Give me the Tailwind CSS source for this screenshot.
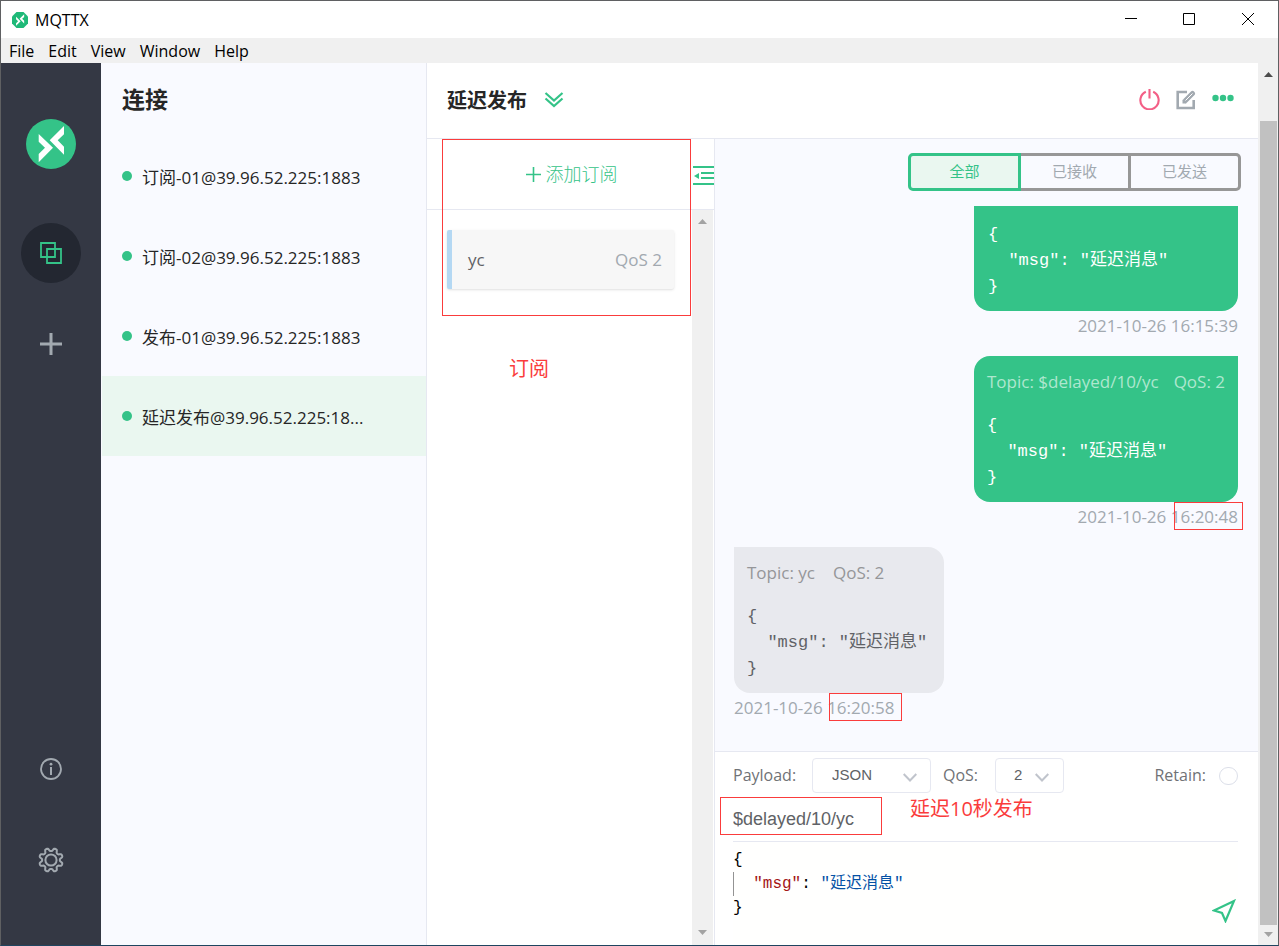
<!DOCTYPE html>
<html lang="zh-CN">
<head>
<meta charset="utf-8">
<meta name="viewport" content="width=device-width, initial-scale=1">
<title>MQTTX</title>
<script src="https://cdn.jsdelivr.net/npm/@tailwindcss/browser@4"></script>
</head>
<body class="font-['Open_Sans','Noto_Sans_CJK_SC',sans-serif] text-[#262626]">
<div class="flex h-screen flex-col overflow-hidden border border-[#5f6062] border-b-[#1f4560] bg-white">

  <!-- Title bar -->
  <header class="flex h-[37px] shrink-0 items-center pl-[11px] text-base text-black">
    <svg class="size-4" viewBox="0 0 50 50" aria-hidden="true"><path fill="#1fb978" d="M14 0h22l14 14v22L36 50H14L0 36V14z"/><path fill="#fff" d="M12.7 15 27 28.7 12.7 43.3V35l6.300-6.300-6.300-6zM38 7v8.300l-6.300 6 6.300 6.400v8L23.700 21.300z"/></svg>
    <span class="ml-[7px]">MQTTX</span>
    <div class="ml-auto flex h-full pb-px">
      <button aria-label="Minimize" class="flex w-[58px] items-center justify-center"><svg class="size-3" viewBox="0 0 12 12"><path d="M0 5.500h12" stroke="#000"/></svg></button>
      <button aria-label="Maximize" class="flex w-[58px] items-center justify-center"><svg class="size-3" viewBox="0 0 12 12"><path d="M.5.5h11v11H.5z" fill="none" stroke="#000"/></svg></button>
      <button aria-label="Close" class="flex w-[60px] items-center justify-center"><svg class="size-3" viewBox="0 0 12 12"><path d="m0 0 12 12M12 0 0 12" stroke="#000"/></svg></button>
    </div>
  </header>

  <nav class="flex h-[25px] shrink-0 items-center gap-[14px] bg-[#f0f0f0] pl-2 text-base text-black">
    <button>File</button><button>Edit</button><button>View</button><button>Window</button><button>Help</button>
  </nav>

  <div class="flex min-h-0 flex-1">
    <!-- Icon rail -->
    <aside class="flex w-[100px] shrink-0 flex-col items-center bg-[#343844] pt-14 pb-[55px] text-[#a2a9b0]">
      <svg class="size-[50px]" viewBox="0 0 50 50" role="img" aria-label="MQTTX"><circle cx="25" cy="25" r="25" fill="#34c388"/><path fill="#fff" d="M12.7 15 27 28.700 12.700 43.300V35l6.300-6.300-6.300-6zM38 7v8.300l-6.300 6 6.300 6.400v8L23.700 21.300z"/></svg>
      <button aria-label="连接" class="mt-[54px] flex size-[60px] items-center justify-center rounded-full bg-[#232731] text-[#34c388]">
        <svg class="size-[22px]" viewBox="0 0 22 22" fill="none" stroke="currentColor" stroke-width="1.800"><path d="M1 1h14v14H1zM7 7h14v14H7z"/></svg>
      </button>
      <button aria-label="新建" class="mt-[31px] flex size-[60px] items-center justify-center">
        <svg class="size-[22px]" viewBox="0 0 22 22" stroke="currentColor" stroke-width="3"><path d="M11 0v22M0 11h22"/></svg>
      </button>
      <button aria-label="关于" class="mt-auto flex size-[60px] items-center justify-center">
        <svg class="size-[22px]" viewBox="0 0 22 22" fill="none" stroke="currentColor" stroke-width="1.800"><circle cx="11" cy="11" r="10"/><path d="M11 9v8" stroke-width="2"/><circle cx="11" cy="6.200" r="1.400" fill="currentColor" stroke="none"/></svg>
      </button>
      <button aria-label="设置" class="mt-[31px] flex size-[60px] items-center justify-center">
        <svg class="size-[26px]" viewBox="0 0 26 26" fill="none" stroke="currentColor" stroke-width="2" stroke-linejoin="round"><circle cx="13" cy="13" r="5.600"/><path id="gear" d=""/></svg>
      </button>
    </aside>

    <!-- Connections -->
    <section class="flex w-[326px] shrink-0 flex-col border-r border-[#e6e8f1] bg-[#f9faff]">
      <h1 class="flex h-[73px] items-center pl-[21px] text-[23px] font-bold">连接</h1>
      <ul class="text-[17px] font-medium">
        <li class="flex h-20 items-center gap-[10px] pl-[21px]"><span class="size-[10px] rounded-full bg-[#34c388]"></span><a href="#" class="pt-1"><span class="font-normal">订阅</span>-01@39.96.52.225:1883</a></li>
        <li class="flex h-20 items-center gap-[10px] pl-[21px]"><span class="size-[10px] rounded-full bg-[#34c388]"></span><a href="#" class="pt-1"><span class="font-normal">订阅</span>-02@39.96.52.225:1883</a></li>
        <li class="flex h-20 items-center gap-[10px] pl-[21px]"><span class="size-[10px] rounded-full bg-[#34c388]"></span><a href="#" class="pt-1"><span class="font-normal">发布</span>-01@39.96.52.225:1883</a></li>
        <li class="ml-px flex h-20 items-center gap-[10px] bg-[#eaf7f0] pl-5"><span class="size-[10px] rounded-full bg-[#34c388]"></span><a href="#" class="pt-1"><span class="font-normal">延迟发布</span>@39.96.52.225:18...</a></li>
      </ul>
    </section>

    <!-- Active connection -->
    <main class="flex min-w-0 flex-1 flex-col">
      <div class="flex h-[76px] shrink-0 items-center border-b border-[#e6e8f1] pr-6 pb-[2px] pl-5">
        <h2 class="pt-[2px] text-xl font-bold">延迟发布</h2>
        <button aria-label="展开" class="ml-[17px] text-[#34c388]"><svg class="h-4 w-5" viewBox="0 0 20 16" fill="none" stroke="currentColor" stroke-width="2.200"><path d="m1.500 1 8.500 7.500L18.500 1M1.500 6.500 10 14l8.500-7.500"/></svg></button>
        <div class="ml-auto flex items-center gap-4">
          <button aria-label="断开连接" class="text-[#f35f86]"><svg class="size-[21px]" viewBox="0 0 20 20" fill="none" stroke="currentColor" stroke-width="2"><path d="M6.500 2.700a8.700 8.700 0 1 0 7 0M10 0v9"/></svg></button>
          <button aria-label="编辑" class="text-[#a2a9b0]"><svg class="size-5" viewBox="0 0 20 20" fill="none" stroke="currentColor"><path d="M11 2H1.700v16h16v-8" stroke-width="2.600"/><path d="m9.500 10.500 7-7" stroke-width="5" stroke-linecap="round"/><path d="M6.500 13.500V9.500l4 4z" fill="currentColor" stroke="none"/><path d="m9.500 10.500 7-7" stroke="#fff" stroke-width="1"/></svg></button>
          <button aria-label="更多" class="text-[#34c388]"><svg class="h-[26px] w-[22px]" viewBox="0 0 22 26" fill="currentColor"><circle cx="3.500" cy="11" r="3.200"/><circle cx="11" cy="11" r="3.200"/><circle cx="18.500" cy="11" r="3.200"/></svg></button>
        </div>
      </div>

      <div class="flex min-h-0 flex-1">
        <!-- Subscriptions -->
        <section class="relative flex w-[288px] shrink-0 flex-col border-r border-[#e6e8f1]">
          <div class="flex h-[71px] shrink-0 items-center border-b border-[#e6e8f1] text-[#34c388]">
            <button class="ml-[15px] flex flex-1 items-center justify-center gap-[5px] pl-2 text-lg font-light">
              <svg class="size-[15px]" viewBox="0 0 15 15" stroke="currentColor" stroke-width="1.600"><path d="M7.500 0v15M0 7.500h15"/></svg>添加订阅
            </button>
            <button aria-label="收起" class="pt-1"><svg class="h-5 w-[21px]" viewBox="0 0 21 20" stroke="currentColor" stroke-width="2"><path d="M0 1h21M8 7h13M8 12h13M0 18h21"/><path fill="currentColor" stroke="none" d="M1 10l5-3v6z"/></svg></button>
          </div>
          <div class="flex min-h-0 flex-1">
            <div class="flex-1 pt-5 pr-[18px] pl-5">
              <div class="flex h-[59px] items-center justify-between rounded-xs border-l-[5px] border-[#b4d8f3] bg-[#f7f7f7] pr-3 pl-4 text-[17px] text-[#606266] shadow-sm">
                <span>yc</span><span class="text-[#a2a9b0]">QoS 2</span>
              </div>
            </div>
            <div class="mr-px flex w-[21px] flex-col items-center justify-between bg-[#f0f0f0] pt-[9px] pb-[10px] text-[#a3a3a3]">
              <svg class="h-[5px] w-[9px]" viewBox="0 0 9 5" fill="currentColor"><path d="M4.500 0 9 5H0z"/></svg>
              <svg class="h-[5px] w-[9px]" viewBox="0 0 9 5" fill="currentColor"><path d="M4.500 5 9 0H0z"/></svg>
            </div>
          </div>
          <!-- Note over the subscriptions -->
          <div class="pointer-events-none absolute top-0 left-[15px] h-[177px] w-[249px] border border-[#fa3c3c]"></div>
          <p class="pointer-events-none absolute top-[216px] left-[82px] text-xl text-[#fa3c3c]">订阅</p>
        </section>

        <!-- Messages -->
        <section class="flex min-w-0 flex-1 flex-col">
          <div class="flex min-h-0 flex-1 flex-col bg-[#f9faff]">
            <div class="mt-[14px] mr-[17px] flex h-[38px] shrink-0 self-end text-[15px] text-[#a2a9b0]">
              <button class="w-[113px] rounded-l-[5px] border-[3px] border-[#34c388] bg-[#eaf7f0] pb-[2px] text-[#34c388]">全部</button>
              <button class="w-[110px] border-y-[3px] border-r-[3px] border-[#979797] pb-[2px]">已接收</button>
              <button class="w-[110px] rounded-r-[5px] border-y-[3px] border-r-[3px] border-[#979797] pb-[2px]">已发送</button>
            </div>
            <div class="mt-[15px] flex min-h-0 flex-1 flex-col gap-[18px] overflow-hidden pr-5 pl-[19px] text-[17px]">
              <article class="flex flex-col items-end">
                <div class="w-[264px] rounded-b-[16px] bg-[#34c388] px-[14px] pt-4 pb-[11px] text-white">
                  <pre class="font-['Liberation_Mono','Noto_Sans_CJK_SC',monospace] leading-[26px]">{
  "msg": "延迟消息"
}</pre>
                </div>
                <time class="pt-[3px] leading-6 text-[#a2a9b0]">2021-10-26 16:15:39</time>
              </article>
              <article class="flex flex-col items-end">
                <div class="w-[264px] rounded-[16px] rounded-tr-none bg-[#34c388] px-[13px] pt-[14px] pb-[11px] text-white">
                  <p class="mb-[19px] flex justify-between leading-6 whitespace-nowrap text-[#aee7cf]"><span>Topic: $delayed/10/yc</span><span>QoS: 2</span></p>
                  <pre class="font-['Liberation_Mono','Noto_Sans_CJK_SC',monospace] leading-[26px]">{
  "msg": "延迟消息"
}</pre>
                </div>
                <time class="pt-[3px] leading-6 text-[#a2a9b0]">2021-10-26 <span class="relative">16:20:48<i class="absolute -top-[3px] -right-[5px] h-7 w-[69px] border border-[#fa3c3c]"></i></span></time>
              </article>
              <article class="flex flex-col items-start">
                <div class="w-[210px] rounded-[16px] rounded-tl-none bg-[#e8e9ee] px-[13px] pt-[14px] pb-[11px] text-[#606266]">
                  <p class="mb-[19px] flex gap-[18px] leading-6 whitespace-nowrap text-[#959699]"><span>Topic: yc</span><span>QoS: 2</span></p>
                  <pre class="font-['Liberation_Mono','Noto_Sans_CJK_SC',monospace] leading-[26px]">{
  "msg": "延迟消息"
}</pre>
                </div>
                <time class="pt-[3px] leading-6 text-[#a2a9b0]">2021-10-26 <span class="relative">16:20:58<i class="absolute -top-[3px] -right-[8px] h-7 w-[73px] border border-[#fa3c3c]"></i></span></time>
              </article>
            </div>
          </div>

          <!-- Publish form -->
          <form class="relative flex h-[194px] shrink-0 flex-col border-t border-[#e6e8f1] pt-[6px] text-[17px] text-[#707276]">
            <div class="flex h-[35px] items-center pr-5 pl-[18px]">
              <label for="payload" class="w-[65px] pb-[2px] text-base">Payload:</label>
              <div class="relative ml-[14px]">
                <select id="payload" class="h-[35px] w-[119px] appearance-none rounded border border-[#e6e8f1] bg-white pl-[19px] font-['Liberation_Sans',sans-serif] text-[15px] font-normal text-[#606266]"><option>JSON</option></select>
                <svg class="pointer-events-none absolute top-[15px] right-[14px] h-[9px] w-[14px]" viewBox="0 0 14 9" fill="none" stroke="#c0c4cc" stroke-width="2"><path d="m.7 1 6.300 6.500L13.300 1"/></svg>
              </div>
              <label for="qos" class="ml-3 w-[38px] pb-[2px] text-base">QoS:</label>
              <div class="relative ml-[14px]">
                <select id="qos" class="h-[35px] w-[69px] appearance-none rounded border border-[#e6e8f1] bg-white pl-[18px] font-['Liberation_Sans',sans-serif] text-[15px] font-normal text-[#606266]"><option>2</option></select>
                <svg class="pointer-events-none absolute top-[15px] right-[15px] h-[9px] w-[14px]" viewBox="0 0 14 9" fill="none" stroke="#c0c4cc" stroke-width="2"><path d="m.7 1 6.300 6.500L13.300 1"/></svg>
              </div>
              <label for="retain" class="ml-auto pb-[2px] text-base">Retain:</label>
              <input id="retain" type="checkbox" class="ml-[13px] h-[18px] w-[19px] appearance-none rounded-full border border-[#dcdfe9] bg-white">
            </div>
            <input aria-label="Topic" value="$delayed/10/yc" class="mr-5 ml-[18px] h-[49px] border-b border-[#e6e8f1] pt-1 font-['Liberation_Sans',sans-serif] text-lg font-normal text-[#606266] outline-none">
            <div class="mr-5 ml-[18px] flex flex-1 flex-col bg-[#fffffe] pt-[6px]">
              <pre class="font-['Liberation_Mono','Noto_Sans_CJK_SC',monospace] text-base leading-6 font-normal text-black">{
<span class="inline-block border-l border-[#939393]">  <span class="text-[#a31515]">"msg"</span>: <span class="text-[#0451a5]">"延迟消息"</span></span>
}</pre>
            </div>
            <button type="button" aria-label="发送" class="absolute right-[22px] bottom-[22px] text-[#34c388]"><svg class="size-6" viewBox="0 0 24 24" fill="none" stroke="currentColor" stroke-width="2.200"><path d="M22 2 2 11.500l8 2.500 3.500 8z"/></svg></button>
            <div class="pointer-events-none absolute top-[45px] left-[5px] h-[38px] w-[162px] border border-[#fa3c3c]"></div>
            <p class="pointer-events-none absolute top-[43px] left-[195px] text-xl font-normal text-[#fa3c3c]">延迟10秒发布</p>
          </form>
        </section>
      </div>
    </main>

    <!-- Window scrollbar -->
    <div class="flex w-5 shrink-0 flex-col items-center bg-[#f0f0f0] pt-[9px] pb-2">
      <svg class="h-[5px] w-[9px]" viewBox="0 0 9 5" fill="#4c4c4c"><path d="M4.500 0 9 5H0z"/></svg>
      <div class="mt-11 mb-[7px] w-[17px] flex-1 bg-[#c1c1c1]"></div>
      <svg class="h-[5px] w-[9px]" viewBox="0 0 9 5" fill="#a3a3a3"><path d="M4.500 5 9 0H0z"/></svg>
    </div>
  </div>
</div>
<script>
  // Eight-toothed gear outline for the settings button
  const points = [];
  for (let i = 0; i < 96; i++) {
    const a = (i / 96) * Math.PI * 2;
    const wave = Math.max(-1, Math.min(1, 1.600 * Math.cos(8 * a + Math.PI)));
    const r = 10.400 + 1.500 * wave;
    points.push((13 + r * Math.cos(a)).toFixed(2) + ' ' + (13 + r * Math.sin(a)).toFixed(2));
  }
  document.getElementById('gear').setAttribute('d', 'M' + points.join('L') + 'z');
</script>
</body>
</html>
